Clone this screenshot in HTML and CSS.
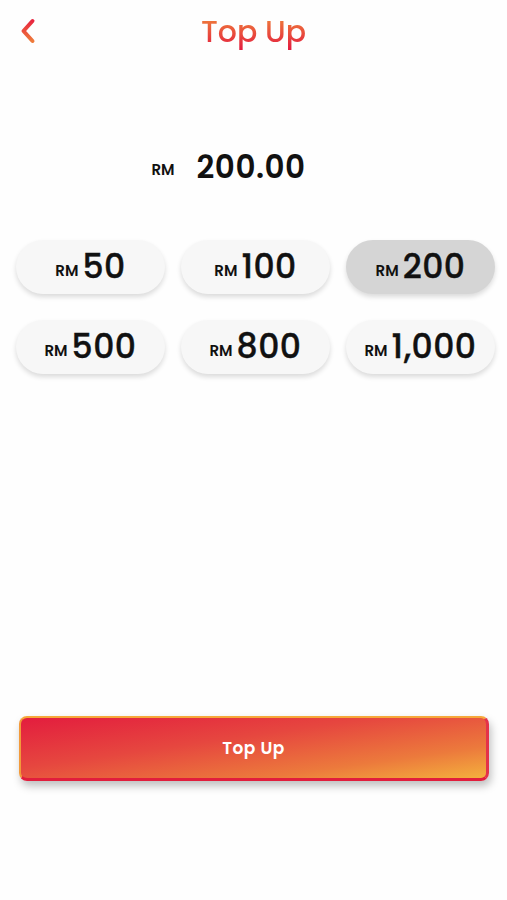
FILE: index.html
```html
<!DOCTYPE html>
<html lang="en">
<head>
    <meta charset="UTF-8">
    <meta name="viewport" content="width=device-width, initial-scale=1.0">
    <title>Top Up</title>
    <link rel="stylesheet" href="styles.css">
</head>
<body>
    <div class="header">
        <a href="#" class="back-button">
            <svg width="16" height="26" viewBox="0 0 16 26">
                <defs>
                    <linearGradient id="chev" x1="0" y1="0" x2="0" y2="1">
                        <stop offset="0" stop-color="#e8263f"/>
                        <stop offset="1" stop-color="#ee7a3a"/>
                    </linearGradient>
                </defs>
                <path d="M12.5 3 L3.5 13 L12.5 23" fill="none" stroke="url(#chev)" stroke-width="4" stroke-linecap="round" stroke-linejoin="round"/>
            </svg>
        </a>
        <div class="title">Top Up</div>
    </div>

    <div class="amount">
        <span class="amount-currency">RM</span>
        <span class="amount-value">200.00</span>
    </div>

    <div class="options">
        <div class="option"><span class="option-currency">RM</span><span class="option-value">50</span></div>
        <div class="option"><span class="option-currency">RM</span><span class="option-value">100</span></div>
        <div class="option selected"><span class="option-currency">RM</span><span class="option-value">200</span></div>
        <div class="option"><span class="option-currency">RM</span><span class="option-value">500</span></div>
        <div class="option"><span class="option-currency">RM</span><span class="option-value">800</span></div>
        <div class="option"><span class="option-currency">RM</span><span class="option-value">1,000</span></div>
    </div>

    <div class="spacer"></div>

    <a href="#" class="topup-button">Top Up</a>
</body>
</html>
```

FILE: styles.css
```css
body {
    margin: 0;
    font-family: "Poppins", "Lato", "Open Sans", sans-serif;
    background-color: #fefefe;
    color: #111;
    width: 507px;
    height: 900px;
    display: flex;
    flex-direction: column;
}

.header {
    height: 64px;
    display: flex;
    align-items: center;
    justify-content: center;
    position: relative;
}

.back-button {
    position: absolute;
    left: 20px;
    top: 18px;
    display: block;
}

.title {
    font-size: 30px;
    font-weight: 500;
    background: linear-gradient(to bottom, #f08a3a 10%, #e3193f 90%);
    -webkit-background-clip: text;
    background-clip: text;
    color: transparent;
}

.amount {
    display: flex;
    justify-content: center;
    align-items: center;
    margin-top: 70px;
    height: 66px;
    padding-right: 50px;
}

.amount-currency {
    font-size: 15px;
    font-weight: 600;
    margin-right: 22px;
    margin-top: 4px;
}

.amount-value {
    font-size: 31px;
    font-weight: 600;
    letter-spacing: 0.5px;
}

.options {
    display: grid;
    grid-template-columns: repeat(3, 1fr);
    gap: 26px 16px;
    padding: 0 12px 0 16px;
    margin-top: 40px;
}

.option {
    height: 54px;
    border-radius: 27px;
    background-color: #f7f7f7;
    box-shadow: 0 3px 5px rgba(0, 0, 0, 0.14);
    display: flex;
    justify-content: center;
    align-items: center;
}

.option.selected {
    background-color: #d5d5d5;
}

.option-currency {
    font-size: 15px;
    font-weight: 600;
    margin-right: 4px;
    margin-top: 6px;
}

.option-value {
    font-size: 33px;
    font-weight: 500;
    letter-spacing: 0.5px;
    -webkit-text-stroke: 0.4px #111;
}

.spacer {
    flex: 1;
}

.topup-button {
    display: flex;
    justify-content: center;
    align-items: center;
    margin: 0 18px 119px 19px;
    height: 60px;
    border-radius: 8px;
    border-top: 2px solid #f6a83a;
    border-left: 2px solid #f29a3a;
    border-bottom: 3px solid #e11d3c;
    border-right: 3px solid #e4324a;
    background: linear-gradient(172deg, #e31d3e 0%, #e6473f 40%, #ec7a3c 75%, #f4b03d 100%);
    box-shadow: 2px 5px 8px rgba(0, 0, 0, 0.25);
    color: white;
    text-decoration: none;
    font-size: 17px;
    font-weight: 600;
    letter-spacing: 0.5px;
}
```
